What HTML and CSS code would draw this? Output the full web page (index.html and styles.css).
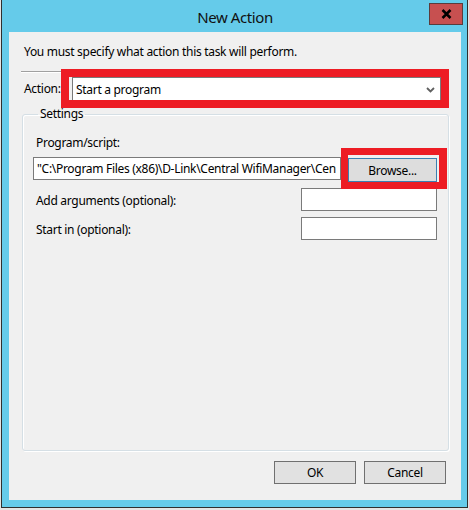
FILE: index.html
```html
<!DOCTYPE html>
<html lang="en">
<head>
    <meta charset="UTF-8">
    <title>New Action</title>
    <link rel="stylesheet" href="styles.css">
</head>
<body>

<div class="window">
    <div class="title-bar">
        <span class="title">New Action</span>
        <button class="close-btn" aria-label="Close">
            <svg width="11" height="10" viewBox="0 0 11 10">
                <path d="M1.5 1 L9.5 9 M9.5 1 L1.5 9" stroke="#000" stroke-width="2.5" fill="none"/>
            </svg>
        </button>
    </div>

    <div class="client">
        <div class="intro">You must specify what action this task will perform.</div>
        <div class="separator"></div>

        <div class="action-row">
            <span class="label">Action:</span>
            <div class="mark mark-combo">
                <div class="combo">
                    <span class="combo-text">Start a program</span>
                    <svg class="chevron" width="9" height="6" viewBox="0 0 9 6">
                        <path d="M1 1 L4.5 4.5 L8 1" stroke="#606060" stroke-width="1.8" fill="none"/>
                    </svg>
                </div>
            </div>
        </div>

        <fieldset class="group">
            <legend>Settings</legend>

            <div class="label field-label">Program/script:</div>
            <div class="program-row">
                <div class="textbox program-box">"C:\Program Files (x86)\D-Link\Central WifiManager\Cen</div>
                <div class="mark mark-browse">
                    <button class="btn browse-btn">Browse...</button>
                </div>
            </div>

            <div class="option-row">
                <span class="label">Add arguments (optional):</span>
                <div class="textbox small-box"></div>
            </div>
            <div class="option-row">
                <span class="label">Start in (optional):</span>
                <div class="textbox small-box"></div>
            </div>
        </fieldset>

        <div class="footer">
            <button class="btn">OK</button>
            <button class="btn">Cancel</button>
        </div>
    </div>
</div>

</body>
</html>
```

FILE: styles.css
```css
* {
    box-sizing: border-box;
}

body {
    margin: 0;
    background-color: #e4e4e4;
    font-family: 'Noto Sans', sans-serif;
    font-size: 12px;
    letter-spacing: -0.3px;
    color: #000;
}

.window {
    position: relative;
    width: 467px;
    margin-left: 1px;
    padding: 0 6px 7px 7px;
    background-color: #65cbea;
    border: 1px solid #2f2f2f;
    border-top: none;
}

.title-bar {
    height: 32px;
    display: flex;
    justify-content: center;
    align-items: center;
}

.title {
    font-size: 15px;
    letter-spacing: -0.4px;
    color: #111;
    padding-top: 2px;
}

.close-btn {
    position: absolute;
    top: 3px;
    right: 4px;
    width: 34px;
    height: 22px;
    padding: 0;
    background-color: #c75050;
    border: 1px solid #5a3c3c;
    display: flex;
    justify-content: center;
    align-items: center;
}

.client {
    height: 468px;
    background-color: #f0f0f0;
    display: flex;
    flex-direction: column;
}

.intro {
    line-height: 16px;
    margin: 12px 0 0 15px;
}

.separator {
    margin: 11px 12px 0 12px;
    border-top: 1px solid #a0a0a0;
    border-bottom: 1px solid #fff;
}

.label {
    line-height: 16px;
    padding-left: 3px;
}

.action-row {
    display: flex;
    align-items: center;
    margin: 4px 0 0 12px;
}

.action-row .label {
    width: 51px;
}

/* red annotation frames */
.mark {
    position: relative;
}

.mark::after {
    content: '';
    position: absolute;
    border: 8px solid #ed1c24;
}

.mark-combo::after {
    top: -8px;
    left: -11px;
    right: -8px;
    bottom: -7px;
}

.mark-browse::after {
    border-width: 7px 8px 7px 7px;
    top: -9px;
    left: -7px;
    right: -10px;
    bottom: -7px;
}

.combo {
    width: 369px;
    height: 24px;
    background-color: #fff;
    border: 1px solid #7a7a7a;
    display: flex;
    align-items: center;
    justify-content: space-between;
    padding: 0 5px 0 3px;
}

.chevron {
    margin-top: 1px;
}

.group {
    flex: 1;
    min-width: 0;
    margin: 5px 12px 0 13px;
    padding: 13px 11px 0 10px;
    border: 1px solid #d5dfe5;
    border-radius: 3px;
    box-shadow: inset 1px 1px 0 #fff, 1px 1px 0 #fff;
}

.group legend {
    margin-left: 5px;
    padding: 0 2px;
    line-height: 16px;
}

.field-label {
    margin-bottom: 6px;
}

.program-row {
    display: flex;
    align-items: flex-start;
    gap: 7px;
}

.textbox {
    height: 23px;
    background-color: #fff;
    border: 1px solid #7a7a7a;
    line-height: 21px;
    padding: 0 3px;
    white-space: nowrap;
    overflow: hidden;
}

.program-box {
    flex: 1;
    min-width: 0;
}

.option-row {
    display: flex;
    justify-content: space-between;
    align-items: center;
    margin-top: 6px;
}

.option-row .label {
    padding-top: 3px;
}

.small-box {
    width: 136px;
}

.btn {
    font-family: 'Noto Sans', sans-serif;
    font-size: 12px;
    letter-spacing: -0.3px;
    color: #000;
    width: 82px;
    height: 23px;
    padding: 0;
    background-color: #e1e1e1;
    border: 1px solid #707070;
}

.browse-btn {
    width: 89px;
    height: 24px;
    margin-top: 1px;
    background-color: #dddddd;
    border-color: #3c7fb1;
}

.footer {
    display: flex;
    justify-content: flex-end;
    gap: 8px;
    margin-top: 10px;
    padding: 0 15px 16px 0;
}
```
